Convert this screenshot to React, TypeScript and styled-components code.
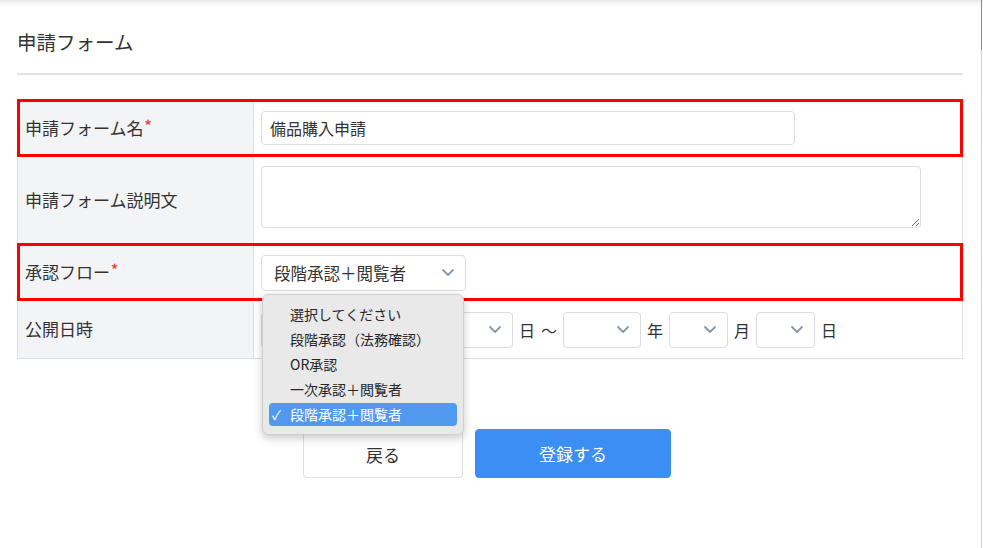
import React from "react";
import styled, { createGlobalStyle } from "styled-components";

const GlobalStyle = createGlobalStyle`
  html, body { margin: 0; padding: 0; background: #fff; }
  body { font-family: "Noto Sans CJK JP", "Noto Sans", sans-serif; color: #333; }
  * { box-sizing: border-box; }
`;

const Page = styled.div`
  position: relative;
  width: 983px;
  height: 548px;
  overflow: hidden;
  background: linear-gradient(to bottom, #e6e6e6 0px, #f7f7f7 3px, #ffffff 7px);
  padding: 29px 20px 0 17px;
  &::after {
    content: "";
    position: absolute;
    top: 0;
    bottom: 0;
    right: 1px;
    width: 1px;
    background: linear-gradient(to bottom, #8a8a8a 0px, #8a8a8a 50px, #d4d4d4 50px);
  }
`;

const Title = styled.h1`
  margin: 0;
  font-size: 19.5px;
  font-weight: 400;
  line-height: 26px;
  color: #333;
`;

const Rule = styled.div`
  height: 2px;
  background: #e3e3e3;
  margin-top: 18px;
`;

const Table = styled.div`
  margin-top: 25px;
  width: 946px;
  border-left: 1px solid #dcdfe3;
  border-right: 1px solid #dcdfe3;
  border-bottom: 1px solid #dcdfe3;
  display: flex;
  flex-direction: column;
`;

const Row = styled.div<{ $h: number; $marked?: boolean }>`
  position: relative;
  display: grid;
  grid-template-columns: 236px 1fr;
  min-height: ${(p) => p.$h}px;
  border-top: 1px solid #dcdfe3;
  &:first-child { border-top: none; }
  ${(p) =>
    p.$marked &&
    `
    z-index: 1;
    outline: 3px solid #ff0000;
    outline-offset: -2px;
  `}
`;

const Label = styled.div`
  background: #f3f4f6;
  border-right: 1px solid #dcdfe3;
  display: flex;
  align-items: center;
  padding: 0 7px 2px;
  font-size: 17px;
  color: #333;
`;

const Required = styled.span`
  color: #e0474c;
  font-size: 14px;
  font-weight: 700;
  position: relative;
  top: -4px;
  margin-left: 1px;
`;

const Value = styled.div<{ $top?: boolean; $pt?: number }>`
  display: flex;
  align-items: ${(p) => (p.$top ? "flex-start" : "center")};
  padding: ${(p) => p.$pt ?? 0}px 7px 0 7px;
  gap: 6px;
  background: #fff;
`;

const TextInput = styled.div`
  width: 534px;
  height: 34px;
  border: 1px solid #d9dce0;
  border-radius: 4px;
  display: flex;
  align-items: center;
  padding: 0 8px;
  font-size: 16px;
  color: #333;
  background: #fff;
`;

const TextArea = styled.textarea`
  width: 660px;
  height: 62px;
  border: 1px solid #d9dce0;
  border-radius: 4px;
  resize: vertical;
  font-family: inherit;
  font-size: 16px;
  background: #fff;
  display: block;
`;

const SelectWrap = styled.div`
  position: relative;
`;

const SelectBox = styled.div<{ $w: number; $h: number }>`
  width: ${(p) => p.$w}px;
  height: ${(p) => p.$h}px;
  border: 1px solid #d9dce0;
  border-radius: 4px;
  background: #fff;
  display: flex;
  align-items: center;
  justify-content: space-between;
  padding: 0 11px 0 12px;
  font-size: 16.5px;
  color: #333;
`;

const Unit = styled.span`
  font-size: 16px;
  color: #333;
`;

const Menu = styled.div`
  position: absolute;
  top: calc(100% + 3px);
  left: 1px;
  width: 202px;
  padding: 8px 6px;
  background: #e9e9e9;
  border: 1px solid #cfcfcf;
  border-radius: 6px;
  box-shadow: 0 3px 8px rgba(0, 0, 0, 0.22);
  display: flex;
  flex-direction: column;
  gap: 2px;
  z-index: 5;
`;

const MenuItem = styled.div<{ $active?: boolean }>`
  height: 23px;
  border-radius: 4px;
  display: grid;
  grid-template-columns: 21px 1fr;
  align-items: center;
  font-size: 14px;
  color: ${(p) => (p.$active ? "#ffffff" : "#262626")};
  background: ${(p) => (p.$active ? "#5198ef" : "transparent")};
`;

const Check = styled.span`
  font-size: 13px;
  padding-left: 3px;
`;

const Buttons = styled.div`
  display: flex;
  justify-content: center;
  align-items: center;
  gap: 12px;
  margin-top: 70px;
  padding-right: 6px;
`;

const Button = styled.button<{ $primary?: boolean }>`
  width: ${(p) => (p.$primary ? 196 : 160)}px;
  height: ${(p) => (p.$primary ? 49 : 48)}px;
  border-radius: 4px;
  border: 1px solid ${(p) => (p.$primary ? "#3b8ef3" : "#dcdfe3")};
  background: ${(p) => (p.$primary ? "#3b8ef3" : "#fff")};
  color: ${(p) => (p.$primary ? "#fff" : "#333")};
  font-family: inherit;
  font-size: 17px;
  margin-top: ${(p) => (p.$primary ? 0 : 1)}px;
  cursor: pointer;
`;

const Chevron = () => (
  <svg width="12" height="7" viewBox="0 0 12 7" fill="none">
    <polyline points="1,1 6,6 11,1" stroke="#8a97a6" strokeWidth="1.8" strokeLinecap="round" strokeLinejoin="round" />
  </svg>
);

const Select = ({ w, h = 36, text }: { w: number; h?: number; text?: string }) => (
  <SelectBox $w={w} $h={h}>
    <span>{text ?? ""}</span>
    <Chevron />
  </SelectBox>
);

const options = ["選択してください", "段階承認（法務確認）", "OR承認", "一次承認＋閲覧者", "段階承認＋閲覧者"];

export default function App() {
  return (
    <>
      <GlobalStyle />
      <Page>
        <Title>申請フォーム</Title>
        <Rule />
        <Table>
          <Row $h={56} $marked>
            <Label>
              <span>
                申請フォーム名<Required>*</Required>
              </span>
            </Label>
            <Value>
              <TextInput>備品購入申請</TextInput>
            </Value>
          </Row>
          <Row $h={88}>
            <Label>申請フォーム説明文</Label>
            <Value $top $pt={9}>
              <TextArea />
            </Value>
          </Row>
          <Row $h={56} $marked>
            <Label>
              <span>
                承認フロー<Required>*</Required>
              </span>
            </Label>
            <Value>
              <SelectWrap>
                <Select w={205} text="段階承認＋閲覧者" />
                <Menu>
                  {options.map((o, i) => (
                    <MenuItem key={o} $active={i === options.length - 1}>
                      <Check>{i === options.length - 1 ? "✓" : ""}</Check>
                      <span>{o}</span>
                    </MenuItem>
                  ))}
                </Menu>
              </SelectWrap>
            </Value>
          </Row>
          <Row $h={58}>
            <Label>公開日時</Label>
            <Value>
              <Select w={78} />
              <Unit>年</Unit>
              <Select w={59} />
              <Unit>月</Unit>
              <Select w={59} />
              <Unit>日</Unit>
              <Unit>～</Unit>
              <Select w={78} />
              <Unit>年</Unit>
              <Select w={59} />
              <Unit>月</Unit>
              <Select w={59} />
              <Unit>日</Unit>
            </Value>
          </Row>
        </Table>
        <Buttons>
          <Button>戻る</Button>
          <Button $primary>登録する</Button>
        </Buttons>
      </Page>
    </>
  );
}
